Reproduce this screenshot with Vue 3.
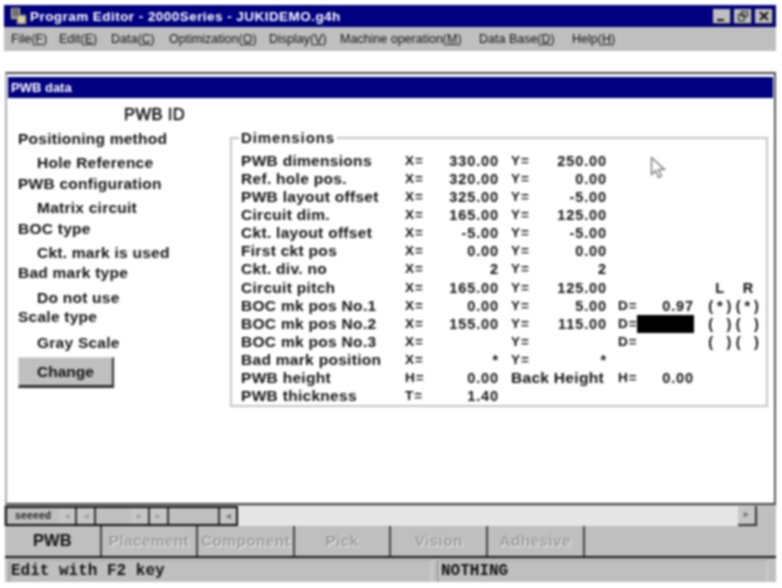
<template>
  <div class="screen">
    <div class="window">
      <header class="titlebar">
        <svg class="app-icon" width="17" height="18" viewBox="0 0 17 18">
          <rect x="1" y="1" width="9" height="11" fill="#c8c8c8" stroke="#555" />
          <rect x="3" y="2" width="2" height="8" fill="#444" />
          <rect x="6" y="2" width="2" height="8" fill="#444" />
          <rect x="7" y="8" width="9" height="9" fill="#d8cfa0" stroke="#555" />
        </svg>
        <span class="title">Program Editor - 2000Series - JUKIDEMO.g4h</span>
        <div class="caption-btns">
          <button class="cap-btn">
            <svg width="18" height="15" viewBox="0 0 18 15"><rect x="4" y="10" width="7" height="2" fill="#111" /></svg>
          </button>
          <button class="cap-btn">
            <svg width="18" height="15" viewBox="0 0 18 15">
              <path d="M7.5 2.5h6v5h-6zM4.5 5.5h6v6h-6z" fill="#bfbfbf" stroke="#111" />
              <path d="M7 2.5h7M4 5.5h7" stroke="#111" />
            </svg>
          </button>
          <button class="cap-btn">
            <svg width="18" height="15" viewBox="0 0 18 15"><path d="M5 3l8 8M13 3l-8 8" stroke="#111" stroke-width="2" /></svg>
          </button>
        </div>
      </header>

      <nav class="menubar">
        <span v-for="m in menus" :key="m.label" class="menu-item" :style="{ width: m.width + 'px' }">{{ m.label }}(<u>{{ m.key }}</u>)</span>
      </nav>

      <div class="gap"></div>

      <section class="child">
        <div class="child-title">PWB data</div>
        <div class="child-body">
          <aside class="left">
            <div class="pwb-id">PWB ID</div>
            <div v-for="item in leftItems" :key="item.text" :class="item.sub ? 'sub' : 'head'" :style="{ height: item.h + 'px' }">{{ item.text }}</div>
            <button class="change">Change</button>
          </aside>

          <fieldset class="dims">
            <legend>Dimensions</legend>
            <div v-for="row in rows" :key="row.label" class="row">
              <span class="lbl">{{ row.label }}</span>
              <span class="eq">{{ row.xk || 'X=' }}</span>
              <span class="num">{{ row.x }}</span>
              <span v-if="row.back" class="back">Back Height</span>
              <span v-else class="eq y">{{ row.noY ? '' : 'Y=' }}</span>
              <span v-if="!row.back" class="num yv">{{ row.y }}</span>
              <span class="eq d">{{ row.back ? 'H=' : row.d !== undefined ? 'D=' : '' }}</span>
              <span class="num dv" :class="{ blocked: row.blocked }">{{ row.back ? '0.00' : row.d }}</span>
              <span class="lr">
                <i v-for="(c, i) in (row.lr || '').split('')" :key="i">{{ c }}</i>
              </span>
            </div>
          </fieldset>
        </div>
      </section>

      <div class="scrollrow">
        <div class="sheet-nav">
          <span class="sheet-name">seeeed</span>
          <span class="nav-btn">&#9668;</span>
          <span class="nav-btn">&#9668;</span>
          <span class="nav-space"></span>
          <span class="nav-btn">&#9658;</span>
          <span class="nav-btn">&#9658;</span>
          <span class="nav-space wide"></span>
          <span class="nav-btn end">&#9668;</span>
        </div>
        <div class="track"></div>
        <span class="nav-btn right">&#9658;</span>
      </div>

      <div class="tabs">
        <div v-for="(t, i) in tabs" :key="t" class="tab" :class="{ disabled: i > 0 }">{{ t }}</div>
      </div>

      <footer class="status">
        <div class="stat first">Edit with F2 key</div>
        <div class="stat second">NOTHING</div>
      </footer>
    </div>
    <svg class="cursor" width="18" height="24" viewBox="0 0 18 24">
      <path d="M1.5 1.5v17l4-4 3 7 3-1.5-3-6.5h6z" fill="#fff" stroke="#666" stroke-width="1.2" />
    </svg>
  </div>
</template>

<script setup>
const menus = [
  { label: 'File', key: 'F', width: 48 },
  { label: 'Edit', key: 'E', width: 52 },
  { label: 'Data', key: 'C', width: 58 },
  { label: 'Optimization', key: 'O', width: 100 },
  { label: 'Display', key: 'V', width: 71 },
  { label: 'Machine operation', key: 'M', width: 139 },
  { label: 'Data Base', key: 'D', width: 93 },
  { label: 'Help', key: 'H', width: 60 }
]

const leftItems = [
  { text: 'Positioning method', h: 24 },
  { text: 'Hole Reference', sub: true, h: 21 },
  { text: 'PWB configuration', h: 24 },
  { text: 'Matrix circuit', sub: true, h: 21 },
  { text: 'BOC type', h: 24 },
  { text: 'Ckt. mark is used', sub: true, h: 20 },
  { text: 'Bad mark type', h: 25 },
  { text: 'Do not use', sub: true, h: 19 },
  { text: 'Scale type', h: 26 },
  { text: 'Gray Scale', sub: true, h: 22 }
]

const rows = [
  { label: 'PWB dimensions', x: '330.00', y: '250.00' },
  { label: 'Ref. hole pos.', x: '320.00', y: '0.00' },
  { label: 'PWB layout offset', x: '325.00', y: '-5.00' },
  { label: 'Circuit dim.', x: '165.00', y: '125.00' },
  { label: 'Ckt. layout offset', x: '-5.00', y: '-5.00' },
  { label: 'First ckt pos', x: '0.00', y: '0.00' },
  { label: 'Ckt. div. no', x: '2', y: '2' },
  { label: 'Circuit pitch', x: '165.00', y: '125.00', lr: ' L  R ' },
  { label: 'BOC mk pos No.1', x: '0.00', y: '5.00', d: '0.97', lr: '(*)(*)' },
  { label: 'BOC mk pos No.2', x: '155.00', y: '115.00', d: '', blocked: true, lr: '( )( )' },
  { label: 'BOC mk pos No.3', x: '', y: '', d: '', lr: '( )( )' },
  { label: 'Bad mark position', x: '*', y: '*' },
  { label: 'PWB height', xk: 'H=', x: '0.00', back: true },
  { label: 'PWB thickness', xk: 'T=', x: '1.40', noY: true }
]

const tabs = ['PWB', 'Placement', 'Component', 'Pick', 'Vision', 'Adhesive']
</script>

<style>
html, body {
  margin: 0;
  background: #fff;
}
</style>

<style scoped>
.screen {
  position: relative;
  width: 782px;
  height: 588px;
  overflow: hidden;
  background: #fff;
  font-family: "Liberation Sans", Arial, sans-serif;
  color: #111;
  filter: blur(0.8px);
}

.cursor {
  position: absolute;
  left: 650px;
  top: 156px;
}

.window {
  width: 772px;
  margin: 5px 0 0 4px;
  display: flex;
  flex-direction: column;
}

.titlebar {
  height: 22px;
  background: #000080;
  display: flex;
  align-items: center;
  padding-left: 6px;
  color: #fff;
}

.app-icon {
  margin-right: 3px;
}

.title {
  font-size: 13.5px;
  font-weight: bold;
  letter-spacing: 0.45px;
  flex: 1;
}

.caption-btns {
  display: flex;
  gap: 3px;
  margin-right: 3px;
}

.cap-btn {
  width: 18px;
  height: 15px;
  padding: 0;
  border: 0;
  background: #bfbfbf;
  border-right: 1px solid #333;
  border-bottom: 1px solid #333;
  display: block;
  overflow: hidden;
}

.menubar {
  height: 24px;
  background: #bfbfbf;
  display: flex;
  align-items: center;
  padding-left: 7px;
  font-size: 12.5px;
  color: #111;
  white-space: nowrap;
}

.menu-item {
  display: block;
}

.gap {
  height: 21px;
}

.child {
  height: 433px;
  box-sizing: border-box;
  margin-left: 1px;
  border-top: 2px solid #444;
  border-right: 2px solid #555;
  border-left: 2px solid #aaa;
  border-bottom: 2px solid #444;
  padding: 3px 1px 0;
  display: flex;
  flex-direction: column;
  background: #fff;
}

.child-title {
  height: 21px;
  line-height: 21px;
  background: #000080;
  color: #fff;
  font-size: 13px;
  font-weight: bold;
  padding-left: 3px;
  flex: none;
}

.child-body {
  display: flex;
  flex: 1;
}

.left {
  width: 222px;
  flex: none;
  padding: 10px 0 0 10px;
  box-sizing: border-box;
  font-size: 15.5px;
  font-weight: bold;
  letter-spacing: 0.25px;
  color: #111;
}

.pwb-id {
  padding-left: 106px;
  height: 22px;
  line-height: 13px;
  font-size: 16.5px;
  font-weight: normal;
  -webkit-text-stroke: 0.6px #111;
  letter-spacing: 0.4px;
}

.head {
  line-height: 18px;
}

.sub {
  padding-left: 19px;
  line-height: 18px;
}

.change {
  display: block;
  width: 96px;
  height: 31px;
  padding: 0;
  margin-top: 1px;
  background: #bfbfbf;
  border: 0;
  border-top: 1px solid #ddd;
  border-left: 1px solid #ddd;
  border-right: 2px solid #333;
  border-bottom: 3px solid #333;
  font: bold 15.5px "Liberation Sans", Arial, sans-serif;
  color: #111;
}

.dims {
  width: 538px;
  height: 277px;
  box-sizing: border-box;
  margin: 32px 0 0 0;
  padding: 6px 0 0 9px;
  border: 2px solid #c4c4c4;
  min-width: 0;
}

.dims legend {
  padding: 0 2px;
  margin-left: -2px;
  font-size: 15px;
  font-weight: bold;
  letter-spacing: 0.9px;
  color: #111;
  line-height: 16px;
}

.row {
  display: grid;
  grid-template-columns: 164px 24px 70px 12px 24px 72px 11px 19px 57px 12px 60px;
  height: 18.08px;
  line-height: 18px;
  font-size: 14.5px;
  font-weight: bold;
  color: #111;
  white-space: nowrap;
}

.lbl {
  grid-column: 1;
  font-size: 15.5px;
  letter-spacing: 0.3px;
}

.eq {
  grid-column: 2;
  font-size: 13.5px;
  letter-spacing: 1px;
}

.eq.y {
  grid-column: 5;
}

.eq.d {
  grid-column: 8;
}

.num {
  grid-column: 3;
  text-align: right;
  letter-spacing: 0.9px;
}

.num.yv {
  grid-column: 6;
}

.num.dv {
  grid-column: 9;
}

.blocked {
  background: #000;
}

.back {
  grid-column: 5 / 7;
  font-size: 15.5px;
  letter-spacing: 0.3px;
}

.lr {
  grid-column: 11;
  display: grid;
  grid-template-columns: repeat(6, 9.2px);
}

.lr i {
  font-style: normal;
  text-align: center;
}

.scrollrow {
  height: 21px;
  background: #bfbfbf;
  display: flex;
  align-items: stretch;
  flex: none;
  box-sizing: border-box;
  padding-top: 1px;
}

.sheet-nav {
  display: flex;
  width: 233px;
  margin-left: 1px;
  box-sizing: border-box;
  border: 2px solid #111;
  background: #bfbfbf;
}

.sheet-name {
  width: 52px;
  font: bold 10px/17px "Liberation Mono", monospace;
  padding-left: 8px;
  box-sizing: border-box;
  color: #222;
}

.nav-btn {
  width: 17px;
  font-size: 9px;
  line-height: 16px;
  text-align: center;
  color: #a0a0a0;
  background: #c6c6c6;
  border-right: 2px solid #333;
  box-sizing: content-box;
}

.nav-space {
  width: 35px;
}

.nav-space.wide {
  width: 50px;
}

.nav-btn.end {
  width: 16px;
  border-left: 2px solid #333;
  border-right: 0;
  color: #777;
}

.track {
  width: 500px;
  background: #e6e6e6;
}

.nav-btn.right {
  width: 17px;
  height: 18px;
  color: #777;
  background: #c6c6c6;
  border-bottom: 2px solid #333;
}

.tabs {
  height: 30px;
  background: #bfbfbf;
  display: flex;
  flex: none;
  margin-left: 1px;
  box-sizing: border-box;
}

.tab {
  width: 96.6px;
  box-sizing: border-box;
  text-align: center;
  line-height: 29px;
  font-size: 15.5px;
  font-weight: bold;
  border-right: 2px solid #444;
  color: #111;
  background: #bfbfbf;
}

.tab:first-child {
  font-size: 16.5px;
}

.tab.disabled {
  color: #999;
  text-shadow: 1px 1px 0 #f2f2f2;
  letter-spacing: 0.3px;
}

.status {
  height: 26px;
  flex: none;
  margin-left: 1px;
  border-top: 2px solid #111;
  background: #bfbfbf;
  box-sizing: border-box;
  display: flex;
  gap: 5px;
  padding: 2px 0 0 4px;
  font: bold 16px/20px "Liberation Mono", monospace;
  color: #111;
}

.stat {
  height: 22px;
  border-left: 1px solid #8a8a8a;
  border-top: 1px solid #a5a5a5;
  border-right: 1px solid #d8d8d8;
  box-sizing: border-box;
  padding-left: 1px;
}

.stat.first {
  width: 423px;
}

.stat.second {
  width: 331px;
  padding-left: 3px;
}
</style>
